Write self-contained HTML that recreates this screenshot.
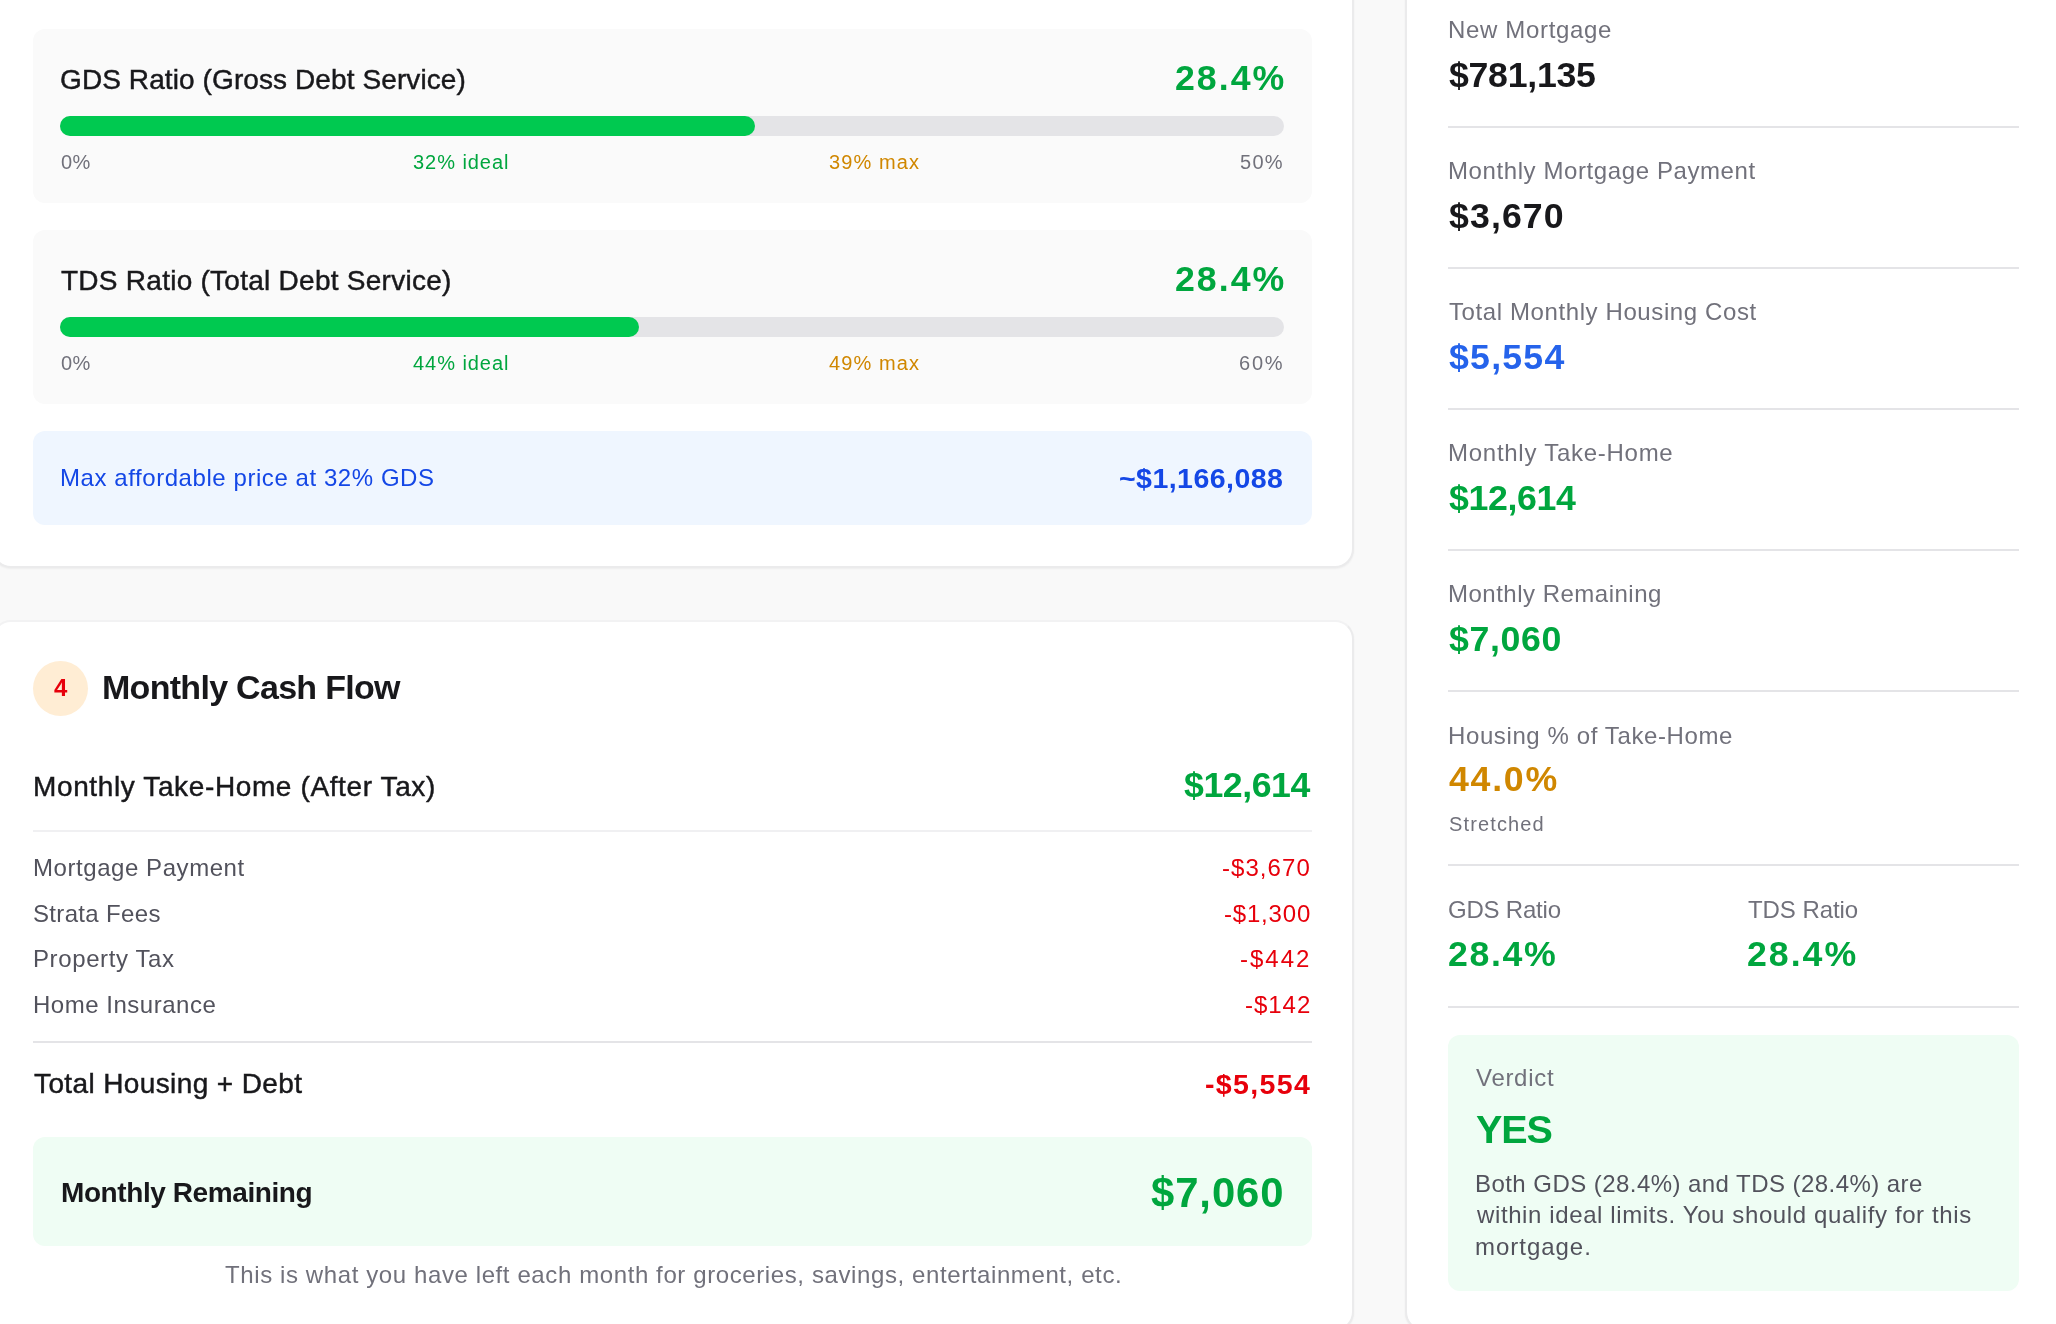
<!DOCTYPE html>
<html><head><meta charset="utf-8">
<style>
html,body{margin:0;padding:0;}
body{width:2056px;height:1324px;overflow:hidden;position:relative;background:#f9f9f9;font-family:"Liberation Sans",sans-serif;}
.t{position:absolute;white-space:nowrap;line-height:1;will-change:transform;}
.card{position:absolute;background:#fff;border:2px solid #ebebec;border-top-color:#f2f2f3;border-radius:19px;box-shadow:0 1px 2px rgba(0,0,0,0.05);box-sizing:border-box;}
.box{position:absolute;border-radius:12px;}
.bar{position:absolute;height:20px;border-radius:10px;background:#e4e4e7;}
.fill{position:absolute;left:0;top:0;height:20px;border-radius:10px;background:#00c950;}
.hr{position:absolute;height:2px;background:#e4e4e7;}
</style></head><body>
<div class="card" style="left:-8px;top:-40px;width:1362px;height:608px;"></div>
<div class="card" style="left:-8px;top:620px;width:1362px;height:711px;"></div>
<div class="card" style="left:1405px;top:-40px;width:700px;height:1371px;"></div>

<div class="box" style="left:33px;top:29px;width:1279px;height:174px;background:#fafafa;"></div>
<div class="bar" style="left:60px;top:116px;width:1224px;"><div class="fill" style="width:695px;"></div></div>
<div class="box" style="left:33px;top:230px;width:1279px;height:174px;background:#fafafa;"></div>
<div class="bar" style="left:60px;top:317px;width:1224px;"><div class="fill" style="width:579px;"></div></div>
<div class="box" style="left:33px;top:431px;width:1279px;height:94px;background:#eff6ff;"></div>

<div style="position:absolute;left:33px;top:661px;width:55px;height:55px;border-radius:50%;background:#ffedd4;"></div>
<div class="hr" style="left:33px;top:830px;width:1279px;background:#f0f0f2;"></div>
<div class="hr" style="left:33px;top:1041px;width:1279px;"></div>
<div class="box" style="left:33px;top:1137px;width:1279px;height:109px;background:#effdf4;"></div>

<div class="hr" style="left:1448px;top:126px;width:571px;"></div>
<div class="hr" style="left:1448px;top:267px;width:571px;"></div>
<div class="hr" style="left:1448px;top:408px;width:571px;"></div>
<div class="hr" style="left:1448px;top:549px;width:571px;"></div>
<div class="hr" style="left:1448px;top:690px;width:571px;"></div>
<div class="hr" style="left:1448px;top:864px;width:571px;"></div>
<div class="hr" style="left:1448px;top:1006px;width:571px;"></div>
<div class="box" style="left:1448px;top:1035px;width:571px;height:256px;background:#effdf4;"></div>
<div class="t" style="left:60.25px;top:65.70px;font-size:28px;color:#18181b;letter-spacing:0.098px;-webkit-text-stroke:0.45px currentColor;">GDS Ratio (Gross Debt Service)</div>
<div class="t" style="left:1174.50px;top:60.78px;font-size:35.7px;color:#00a63e;font-weight:700;letter-spacing:2.010px;">28.4%</div>
<div class="t" style="left:61.25px;top:151.82px;font-size:20px;color:#71717b;letter-spacing:0.277px;">0%</div>
<div class="t" style="left:412.50px;top:152.07px;font-size:20px;color:#00a63e;letter-spacing:0.950px;">32% ideal</div>
<div class="t" style="left:829.00px;top:152.07px;font-size:20px;color:#d08700;letter-spacing:1.105px;">39% max</div>
<div class="t" style="left:1240.00px;top:151.82px;font-size:20px;color:#71717b;letter-spacing:1.252px;">50%</div>
<div class="t" style="left:61.25px;top:266.70px;font-size:28px;color:#18181b;letter-spacing:0.260px;-webkit-text-stroke:0.45px currentColor;">TDS Ratio (Total Debt Service)</div>
<div class="t" style="left:1174.50px;top:261.78px;font-size:35.7px;color:#00a63e;font-weight:700;letter-spacing:2.010px;">28.4%</div>
<div class="t" style="left:61.25px;top:352.82px;font-size:20px;color:#71717b;letter-spacing:0.277px;">0%</div>
<div class="t" style="left:412.50px;top:353.07px;font-size:20px;color:#00a63e;letter-spacing:0.950px;">44% ideal</div>
<div class="t" style="left:829.00px;top:353.07px;font-size:20px;color:#d08700;letter-spacing:1.105px;">49% max</div>
<div class="t" style="left:1239.00px;top:352.82px;font-size:20px;color:#71717b;letter-spacing:1.752px;">60%</div>
<div class="t" style="left:60.25px;top:465.68px;font-size:24px;color:#1447e6;letter-spacing:0.565px;">Max affordable price at 32% GDS</div>
<div class="t" style="left:1119.40px;top:463.82px;font-size:28.56px;color:#1447e6;font-weight:700;letter-spacing:0.433px;">~$1,166,088</div>
<div class="t" style="left:53.50px;top:675.68px;font-size:24px;color:#e7000b;font-weight:700;">4</div>
<div class="t" style="left:101.70px;top:670.42px;font-size:34px;color:#18181b;font-weight:700;letter-spacing:-0.708px;">Monthly Cash Flow</div>
<div class="t" style="left:32.75px;top:772.55px;font-size:28px;color:#18181b;letter-spacing:0.623px;-webkit-text-stroke:0.45px currentColor;">Monthly Take-Home (After Tax)</div>
<div class="t" style="left:1183.50px;top:768.28px;font-size:35.7px;color:#00a63e;font-weight:700;letter-spacing:-0.442px;">$12,614</div>
<div class="t" style="left:32.50px;top:855.68px;font-size:24px;color:#52525c;letter-spacing:0.560px;">Mortgage Payment</div>
<div class="t" style="left:1222.00px;top:855.68px;font-size:24px;color:#e7000b;letter-spacing:1.058px;">-$3,670</div>
<div class="t" style="left:32.50px;top:901.68px;font-size:24px;color:#52525c;letter-spacing:0.335px;">Strata Fees</div>
<div class="t" style="left:1223.50px;top:901.68px;font-size:24px;color:#e7000b;letter-spacing:0.808px;">-$1,300</div>
<div class="t" style="left:32.50px;top:946.78px;font-size:24px;color:#52525c;letter-spacing:0.616px;">Property Tax</div>
<div class="t" style="left:1240.30px;top:946.78px;font-size:24px;color:#e7000b;letter-spacing:2.016px;">-$442</div>
<div class="t" style="left:32.50px;top:993.18px;font-size:24px;color:#52525c;letter-spacing:0.520px;">Home Insurance</div>
<div class="t" style="left:1244.50px;top:993.18px;font-size:24px;color:#e7000b;letter-spacing:0.966px;">-$142</div>
<div class="t" style="left:34.40px;top:1070.05px;font-size:28px;color:#18181b;letter-spacing:0.383px;-webkit-text-stroke:0.45px currentColor;">Total Housing + Debt</div>
<div class="t" style="left:1205.00px;top:1069.87px;font-size:28.56px;color:#e7000b;font-weight:700;letter-spacing:1.343px;">-$5,554</div>
<div class="t" style="left:60.90px;top:1178.80px;font-size:28px;color:#18181b;font-weight:700;letter-spacing:-0.414px;">Monthly Remaining</div>
<div class="t" style="left:1150.60px;top:1171.85px;font-size:41.82px;color:#00a63e;font-weight:700;letter-spacing:0.933px;">$7,060</div>
<div class="t" style="left:224.50px;top:1262.78px;font-size:24px;color:#71717b;letter-spacing:0.603px;">This is what you have left each month for groceries, savings, entertainment, etc.</div>
<div class="t" style="left:1448.00px;top:18.18px;font-size:24px;color:#71717b;letter-spacing:0.662px;">New Mortgage</div>
<div class="t" style="left:1449.00px;top:58.03px;font-size:35.7px;color:#18181b;font-weight:700;letter-spacing:-0.286px;">$781,135</div>
<div class="t" style="left:1448.00px;top:159.18px;font-size:24px;color:#71717b;letter-spacing:0.595px;">Monthly Mortgage Payment</div>
<div class="t" style="left:1449.00px;top:199.03px;font-size:35.7px;color:#18181b;font-weight:700;letter-spacing:1.099px;">$3,670</div>
<div class="t" style="left:1449.00px;top:300.18px;font-size:24px;color:#71717b;letter-spacing:0.601px;">Total Monthly Housing Cost</div>
<div class="t" style="left:1449.00px;top:340.03px;font-size:35.7px;color:#2563eb;font-weight:700;letter-spacing:1.219px;">$5,554</div>
<div class="t" style="left:1448.00px;top:441.18px;font-size:24px;color:#71717b;letter-spacing:0.734px;">Monthly Take-Home</div>
<div class="t" style="left:1449.00px;top:481.03px;font-size:35.7px;color:#00a63e;font-weight:700;letter-spacing:-0.359px;">$12,614</div>
<div class="t" style="left:1448.00px;top:582.18px;font-size:24px;color:#71717b;letter-spacing:0.495px;">Monthly Remaining</div>
<div class="t" style="left:1449.00px;top:622.03px;font-size:35.7px;color:#00a63e;font-weight:700;letter-spacing:0.659px;">$7,060</div>
<div class="t" style="left:1448.00px;top:724.18px;font-size:24px;color:#71717b;letter-spacing:0.606px;">Housing % of Take-Home</div>
<div class="t" style="left:1449.00px;top:762.43px;font-size:35.7px;color:#d08700;font-weight:700;letter-spacing:1.735px;">44.0%</div>
<div class="t" style="left:1449.00px;top:813.97px;font-size:20px;color:#71717b;letter-spacing:1.140px;">Stretched</div>
<div class="t" style="left:1448.00px;top:897.78px;font-size:24px;color:#71717b;letter-spacing:-0.207px;">GDS Ratio</div>
<div class="t" style="left:1448.00px;top:936.53px;font-size:35.7px;color:#00a63e;font-weight:700;letter-spacing:1.610px;">28.4%</div>
<div class="t" style="left:1747.60px;top:897.78px;font-size:24px;color:#71717b;letter-spacing:-0.068px;">TDS Ratio</div>
<div class="t" style="left:1746.60px;top:936.53px;font-size:35.7px;color:#00a63e;font-weight:700;letter-spacing:1.985px;">28.4%</div>
<div class="t" style="left:1476.00px;top:1065.58px;font-size:24px;color:#71717b;letter-spacing:0.699px;">Verdict</div>
<div class="t" style="left:1476.00px;top:1109.66px;font-size:39.5px;color:#00a63e;font-weight:700;letter-spacing:-1.096px;">YES</div>
<div class="t" style="left:1475.00px;top:1171.58px;font-size:24px;color:#52525c;letter-spacing:0.447px;">Both GDS (28.4%) and TDS (28.4%) are</div>
<div class="t" style="left:1477.00px;top:1203.43px;font-size:24px;color:#52525c;letter-spacing:0.608px;">within ideal limits. You should qualify for this</div>
<div class="t" style="left:1475.00px;top:1235.28px;font-size:24px;color:#52525c;letter-spacing:0.976px;">mortgage.</div>
</body></html>
